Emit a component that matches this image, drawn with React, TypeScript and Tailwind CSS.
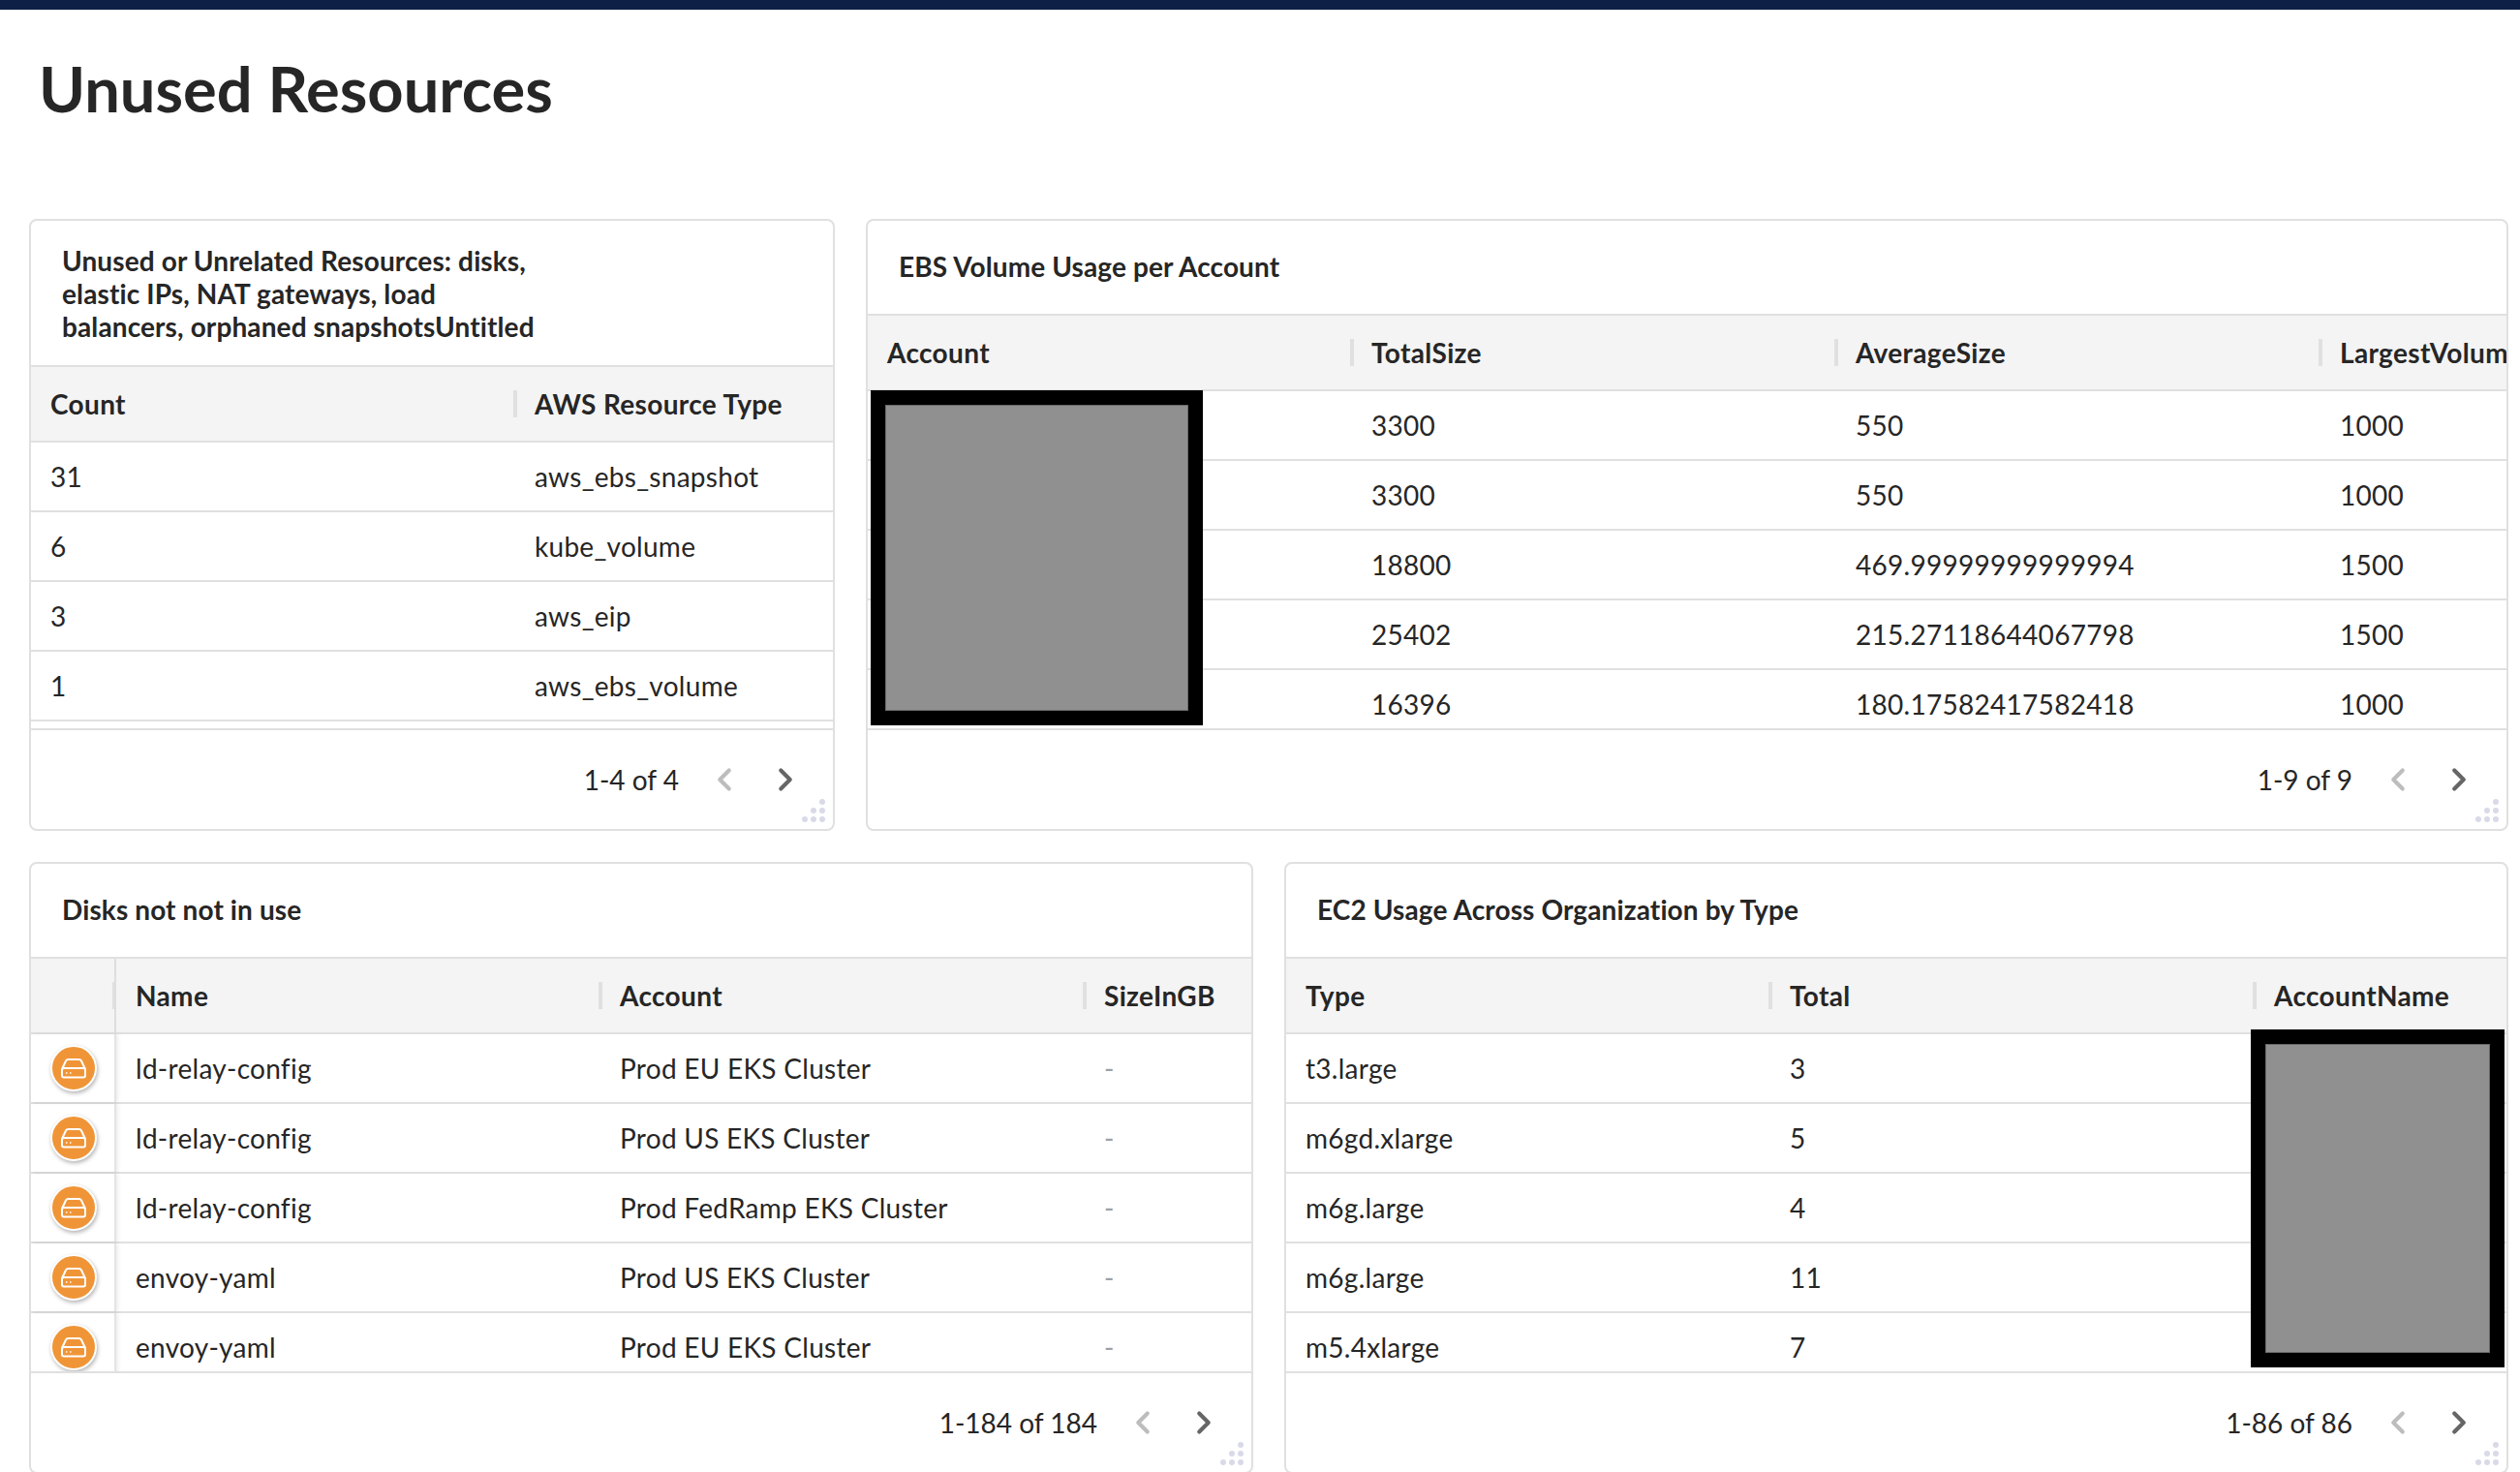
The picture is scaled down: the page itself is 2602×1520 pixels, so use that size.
import { ReactNode } from 'react'
import { ChevronLeft, ChevronRight } from 'lucide-react'

type CardProps = {
  title: ReactNode
  titleHeight: string
  columns: string[]
  rows: string[][]
  range: string
  hasIcon?: boolean
  className: string
  children?: ReactNode
}

const disksRows = [
  ['ld-relay-config', 'Prod EU EKS Cluster', '-'],
  ['ld-relay-config', 'Prod US EKS Cluster', '-'],
  ['ld-relay-config', 'Prod FedRamp EKS Cluster', '-'],
  ['envoy-yaml', 'Prod US EKS Cluster', '-'],
  ['envoy-yaml', 'Prod EU EKS Cluster', '-'],
]

const ebsRows = [
  ['', '3300', '550', '1000'],
  ['', '3300', '550', '1000'],
  ['', '18800', '469.99999999999994', '1500'],
  ['', '25402', '215.27118644067798', '1500'],
  ['', '16396', '180.17582417582418', '1000'],
]

const ec2Rows = [
  ['t3.large', '3', ''],
  ['m6gd.xlarge', '5', ''],
  ['m6g.large', '4', ''],
  ['m6g.large', '11', ''],
  ['m5.4xlarge', '7', ''],
]

const unusedRows = [
  ['31', 'aws_ebs_snapshot'],
  ['6', 'kube_volume'],
  ['3', 'aws_eip'],
  ['1', 'aws_ebs_volume'],
]

function DiskIcon() {
  return (
    <span className="ml-[1px] flex h-[48px] w-[48px] items-center justify-center rounded-full border-2 border-white bg-[#f09537] shadow-[1px_2px_4px_rgba(0,0,0,0.3)]">
      <svg width="28" height="24" viewBox="0 0 28 24" fill="none" stroke="white" strokeWidth="2">
        <path d="M2 13 L6 4.5 Q6.8 3 8.5 3 H19.5 Q21.2 3 22 4.5 L26 13" />
        <rect x="2" y="12" width="24" height="9.5" rx="2" />
        <path d="M6 17 H7.5 M10 17 H11.5" strokeWidth="1.6" />
      </svg>
    </span>
  )
}

function ResizeDots() {
  const dots = ['col-start-3', 'col-start-2', 'col-start-3', 'col-start-1', 'col-start-2', 'col-start-3']
  return (
    <div className="absolute bottom-[7px] right-[8px] grid grid-cols-3 gap-[3px]">
      {dots.map((col, i) => (
        <span key={i} className={`h-[6px] w-[6px] rounded-full bg-[#d9dae8] ${col}`} />
      ))}
    </div>
  )
}

function Card({ title, titleHeight, columns, rows, range, hasIcon, className, children }: CardProps) {
  return (
    <section className={`relative flex h-[632px] shrink-0 flex-col overflow-hidden rounded-lg border-2 border-[#e0e0e0] bg-white ${className}`}>
      <h2 className={`flex shrink-0 items-center border-b-2 border-[#e0e0e0] px-8 pb-[2px] text-[28px] font-bold leading-[34px] tracking-[0.12px] text-[#262626] ${titleHeight}`}>
        {title}
      </h2>

      <div className="min-h-0 flex-1 overflow-hidden border-b-2 border-[#e0e0e0]">
        <div className="flex h-[78px] items-center border-b-2 border-[#e0e0e0] bg-[#f4f4f4]">
          {hasIcon ? (
            <div className="flex h-full w-[88px] shrink-0 items-center justify-end border-r-2 border-[#dedede]">
              <span className="h-[28px] w-[2px] bg-[#e0e0e0]" />
            </div>
          ) : null}
          {columns.map((column, i) => (
            <div key={column} className="flex w-[500px] shrink-0 items-center justify-between pl-5 text-[28px] font-bold tracking-[0.35px] text-[#262626]">
              <span className="whitespace-nowrap">{column}</span>
              {i < columns.length - 1 ? <span className="-mr-[2px] h-[28px] w-[4px] bg-[#e0e0e0]" /> : null}
            </div>
          ))}
        </div>

        {rows.map((row, r) => (
          <div key={r} className="flex h-[72px] items-center border-b-2 border-[#e0e0e0] text-[28px] tracking-[0.28px] text-[#262626]">
            {hasIcon ? (
              <div className="flex h-full w-[88px] shrink-0 items-center justify-center border-r-2 border-[#e4e4e4] shadow-[2px_0_4px_rgba(0,0,0,0.08)]">
                <DiskIcon />
              </div>
            ) : null}
            {row.map((cell, c) => (
              <div key={c} className={`w-[500px] shrink-0 whitespace-nowrap pl-5 ${cell === '-' ? 'text-[#a0a0a0]' : ''}`}>
                {cell}
              </div>
            ))}
          </div>
        ))}
      </div>

      <footer className="flex h-[102px] shrink-0 items-center justify-end text-[28px] text-[#262626]">
        <span>{range}</span>
        <ChevronLeft className="ml-[28px] h-[38px] w-[38px] text-[#bdbdbd]" strokeWidth={2.6} />
        <ChevronRight className="ml-[25px] mr-[30px] h-[38px] w-[38px] text-[#666666]" strokeWidth={2.6} />
      </footer>
      <ResizeDots />
      {children}
    </section>
  )
}

function Redaction({ className }: { className: string }) {
  return <div className={`absolute border-[15px] border-black bg-[#909090] shadow-[inset_0_0_0_1px_#6a6a6a] ${className}`} />
}

export default function App() {
  return (
    <div className="h-[1520px] overflow-hidden bg-white font-['Lato',sans-serif]">
      <div className="h-[10px] bg-[#0e2045]" />
      <div className="flex h-[216px] items-start pl-10 pt-[27px]">
        <h1 className="text-[65px] font-bold leading-[108px] text-[#262626]">Unused Resources</h1>
      </div>

      <div className="flex flex-col gap-8 pl-[30px] pr-3">
        <div className="flex gap-8">
          <Card
            className="w-[832px]"
            titleHeight="h-[151px] pt-[2px]"
            title={
              <span>
                Unused or Unrelated Resources: disks,
                <br />
                elastic IPs, NAT gateways, load
                <br />
                balancers, orphaned snapshotsUntitled
              </span>
            }
            columns={['Count', 'AWS Resource Type']}
            rows={unusedRows}
            range="1-4 of 4"
          />
          <Card
            className="flex-1"
            titleHeight="h-[98px]"
            title="EBS Volume Usage per Account"
            columns={['Account', 'TotalSize', 'AverageSize', 'LargestVolume']}
            rows={ebsRows}
            range="1-9 of 9"
          >
            <Redaction className="left-[3px] top-[175px] h-[346px] w-[343px]" />
          </Card>
        </div>

        <div className="flex gap-8">
          <Card
            className="w-[1264px]"
            titleHeight="h-[98px]"
            title="Disks not not in use"
            columns={['Name', 'Account', 'SizeInGB']}
            rows={disksRows}
            range="1-184 of 184"
            hasIcon
          />
          <Card
            className="flex-1"
            titleHeight="h-[98px]"
            title="EC2 Usage Across Organization by Type"
            columns={['Type', 'Total', 'AccountName']}
            rows={ec2Rows}
            range="1-86 of 86"
          >
            <Redaction className="left-[996px] top-[171px] h-[349px] w-[262px]" />
          </Card>
        </div>
      </div>
    </div>
  )
}
